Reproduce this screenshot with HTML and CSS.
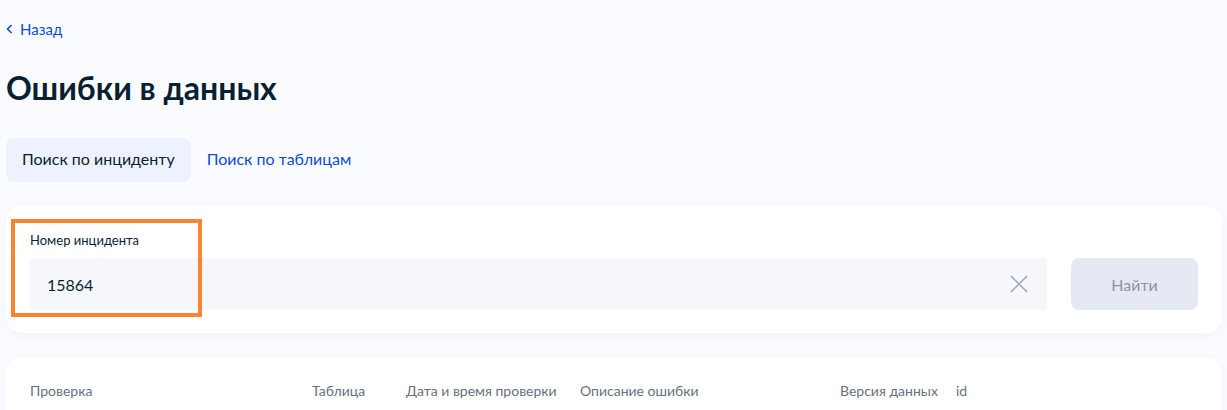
FILE: index.html
```html
<!DOCTYPE html>
<html lang="ru">
<head>
  <meta charset="UTF-8" />
  <meta name="viewport" content="width=device-width, initial-scale=1.0" />
  <title>Ошибки в данных</title>
  <link rel="stylesheet" href="styles.css">
</head>
<body>
  <a class="back" href="#">
    <svg width="7" height="10" viewBox="0 0 7 10"><path d="M5.5 1 L1.5 5 L5.5 9" fill="none" stroke="#0d4cd3" stroke-width="1.6"/></svg>
    Назад
  </a>

  <h1 class="title">Ошибки в данных</h1>

  <nav class="tabs">
    <span class="tab active">Поиск по инциденту</span>
    <a class="tab" href="#">Поиск по таблицам</a>
  </nav>

  <section class="card search">
    <div class="highlight"></div>
    <label class="label">Номер инцидента</label>
    <div class="row">
      <div class="input">
        <span>15864</span>
        <svg class="clear" width="18" height="18" viewBox="0 0 18 18"><path d="M1 1 L17 17 M17 1 L1 17" stroke="#9aa4bd" stroke-width="1.5"/></svg>
      </div>
      <button class="button">Найти</button>
    </div>
  </section>

  <section class="card results">
    <div class="thead">
      <span>Проверка</span>
      <span>Таблица</span>
      <span>Дата и время проверки</span>
      <span>Описание ошибки</span>
      <span>Версия данных</span>
      <span>id</span>
    </div>
  </section>
</body>
</html>
```

FILE: styles.css
```css
body {
  margin: 0;
  padding: 19px 5px 0 6px;
  font-family: Lato, "Noto Sans", sans-serif;
  background: #fafbff;
  color: #0b1f33;
}
.back {
  display: flex;
  align-items: center;
  gap: 7px;
  color: #0d4cd3;
  text-decoration: none;
  font-size: 15px;
  line-height: 20px;
}
.title {
  margin: 29px 0 0;
  font-size: 32px;
  line-height: 40px;
  font-weight: 700;
}
.tabs {
  display: flex;
  margin-top: 30px;
}
.tab {
  padding: 11px 16px 13px;
  font-size: 16px;
  line-height: 20px;
  border-radius: 8px;
  color: #0d4cd3;
  text-decoration: none;
}
.tab.active {
  background: #edf2fe;
  color: #0b1f33;
}
.card {
  background: #fff;
  border-radius: 16px;
  box-shadow: 0 2px 8px rgba(100,120,180,0.06);
  padding: 24px;
}
.search {
  position: relative;
  margin-top: 24px;
  padding-bottom: 23px;
}
.highlight {
  position: absolute;
  left: 5px;
  top: 13px;
  width: 183px;
  height: 90px;
  border: 4px solid #fb8331;
}
.label {
  display: block;
  font-size: 13px;
  line-height: 20px;
  margin-bottom: 8px;
}
.row {
  display: flex;
  gap: 24px;
}
.input {
  flex: 1;
  height: 52px;
  background: #f5f7fb;
  border-radius: 4px;
  display: flex;
  align-items: center;
  justify-content: space-between;
  padding: 0 19px 0 17px;
  font-size: 16px;
}
.button {
  width: 127px;
  height: 52px;
  border: none;
  border-radius: 8px;
  background: #e4e9f4;
  color: #8d95a7;
  font-family: inherit;
  font-size: 16px;
  padding-bottom: 1px;
}
.results {
  margin-top: 24px;
  padding-top: 24px;
}
.thead {
  display: grid;
  grid-template-columns: 282px 94px 174px 260px 116px 1fr;
  font-size: 14px;
  line-height: 20px;
  color: #66727f;
}
```
